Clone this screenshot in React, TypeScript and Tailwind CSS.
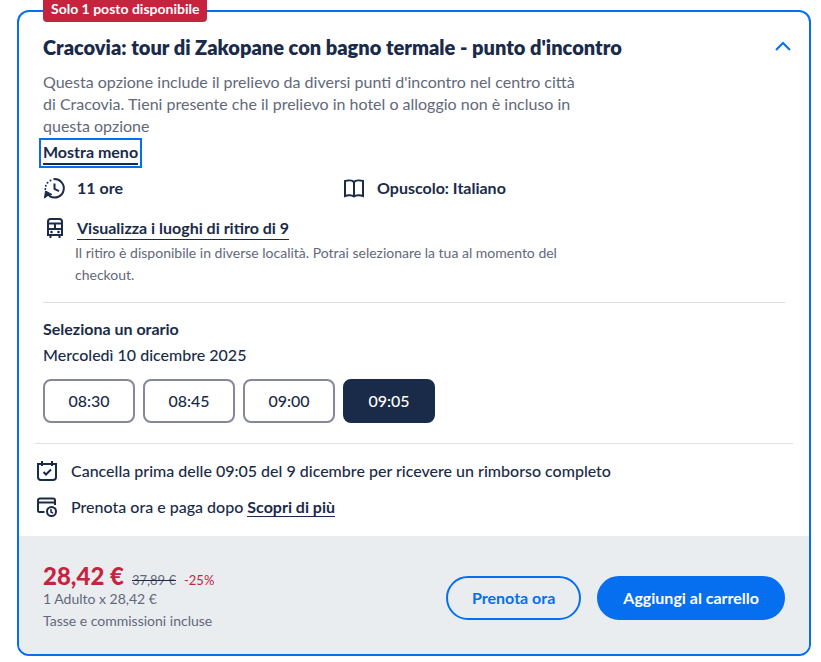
import { useState } from 'react';

const times = ['08:30', '08:45', '09:00', '09:05'];

const iconProps = {
    width: 24,
    height: 24,
    viewBox: '0 0 24 24',
    fill: 'none',
    stroke: 'currentColor',
    strokeWidth: 2,
    'aria-hidden': true,
};

function DurationIcon() {
    return (
        <svg {...iconProps}>
            <path d="M10.500 3.200A9.200 9.200 0 1 1 7 20.300" />
            <path d="M11.500 7.500V13L16 15.200" />
            <path d="M1.500 22L2.500 15L9 18.500L5.500 19Z" fill="currentColor" strokeWidth="1" />
            <path d="M4 18L7.500 20.500" />
            <g fill="currentColor" stroke="none">
                <circle cx="7.500" cy="4.500" r="1" />
                <circle cx="4.500" cy="6.800" r="1" />
                <circle cx="2.800" cy="9.800" r="1" />
                <circle cx="2.300" cy="13" r="1" />
            </g>
        </svg>
    );
}

function BookIcon() {
    return (
        <svg {...iconProps}>
            <path d="M11 6C9 4 4.500 4.200 2 5V20C4.500 19 9 19 11 20.500C13 19 17.500 19 20 20V5C17.500 4.200 13 4 11 6Z" />
            <path d="M11 6V20" />
        </svg>
    );
}

function BusIcon() {
    return (
        <svg {...iconProps}>
            <path d="M5 19V5.500C5 4 6 3 7.500 3H16.500C18 3 19 4 19 5.500V19Z" />
            <path d="M5 7.500H19M5 13H19M12 7.500V13" />
            <path d="M7.500 19V22M16.500 19V22" />
            <circle cx="8.500" cy="16" r="1.300" fill="currentColor" stroke="none" />
            <circle cx="15.500" cy="16" r="1.300" fill="currentColor" stroke="none" />
        </svg>
    );
}

function CalendarIcon() {
    return (
        <svg {...iconProps}>
            <path d="M3 5H21V18C21 19.800 19.800 21 18 21H6C4.200 21 3 19.800 3 18Z" />
            <path d="M7 2V7M17 2V7" />
            <path d="M8.500 13L11 15.500L16 10.500" />
        </svg>
    );
}

function PayLaterIcon() {
    return (
        <svg {...iconProps}>
            <path d="M9.500 17H4.500C3.500 17 3 16.500 3 15.500V5.500C3 4.200 3.700 3.500 5 3.500H18C19.300 3.500 20 4.200 20 5.500V10" />
            <path d="M3 7.500H20" />
            <circle cx="16.500" cy="16.500" r="4.500" />
            <path d="M16 14V17L18 18" strokeWidth="1.500" />
        </svg>
    );
}

export default function App() {
    const [selected, setSelected] = useState('09:05');

    return (
        <main className="bg-white pt-[10px] pr-[10px] pb-1.5 pl-[17px] font-[Lato,'Liberation_Sans',sans-serif] text-base text-[#1a2b49]">
            <article className="relative rounded-xl border-2 border-[#066ff0]">
                <span className="absolute -top-4 left-6 rounded bg-[#c7233f] px-2 py-1 text-sm leading-[18px] font-bold text-white">
                    Solo 1 posto disponibile
                </span>

                <div className="px-6 pt-[19px]">
                    <header className="flex items-center justify-between">
                        <h2 className="text-xl leading-8 font-extrabold">
                            Cracovia: tour di Zakopane con bagno termale - punto d'incontro
                        </h2>
                        <button type="button" aria-label="Chiudi dettagli" className="-mr-3.5 p-1 text-[#066ff0]">
                            <svg {...iconProps}>
                                <path d="M5 15L12 8L19 15" />
                            </svg>
                        </button>
                    </header>

                    <p className="mt-2 max-w-[532px] leading-[22px] text-[#63687a]">
                        Questa opzione include il prelievo da diversi punti d'incontro nel centro città di Cracovia. Tieni
                        presente che il prelievo in hotel o alloggio non è incluso in questa opzione
                    </p>
                    <button type="button" className="-mx-1 mt-px block border-2 border-[#066ff0] px-0.5 py-px">
                        <span className="block border-b-2 border-current leading-[22px] font-bold">Mostra meno</span>
                    </button>

                    <div className="mt-2 grid max-w-[600px] grid-cols-2">
                        <div className="flex items-center gap-2.5 font-bold">
                            <DurationIcon />
                            11 ore
                        </div>
                        <div className="flex items-center gap-2.5 font-bold">
                            <BookIcon />
                            Opuscolo: Italiano
                        </div>
                    </div>

                    <div className="mt-4 flex max-w-[536px] gap-2">
                        <span className="shrink-0">
                            <BusIcon />
                        </span>
                        <div>
                            <a href="#pickup" className="ml-0.5 inline-block border-b border-current leading-[22px] font-bold">
                                Visualizza i luoghi di ritiro di 9
                            </a>
                            <p className="mt-0.5 text-sm leading-[22px] text-[#63687a]">
                                Il ritiro è disponibile in diverse località. Potrai selezionare la tua al momento del checkout.
                            </p>
                        </div>
                    </div>

                    <section className="mt-4 border-t border-[#dcdfe4] pt-[15px]">
                        <h3 className="leading-[22px] font-bold">Seleziona un orario</h3>
                        <p className="mt-1 leading-[22px] font-medium">Mercoledì 10 dicembre 2025</p>
                        <div className="mt-[13px] flex flex-wrap gap-2">
                            {times.map(time => (
                                <button
                                    key={time}
                                    type="button"
                                    aria-pressed={time === selected}
                                    onClick={() => setSelected(time)}
                                    className={`h-11 w-23 rounded-lg border-2 font-medium ${
                                        time === selected ? 'border-[#1a2b49] bg-[#1a2b49] text-white' : 'border-[#86879a] bg-white'
                                    }`}
                                >
                                    {time}
                                </button>
                            ))}
                        </div>
                    </section>
                </div>

                <ul className="mx-4 mt-5 space-y-3 border-t border-[#dcdfe4] pt-[15px] pb-[17px] font-medium">
                    <li className="flex items-center gap-3">
                        <CalendarIcon />
                        Cancella prima delle 09:05 del 9 dicembre per ricevere un rimborso completo
                    </li>
                    <li className="flex items-center gap-3">
                        <PayLaterIcon />
                        <span>
                            Prenota ora e paga dopo{' '}
                            <a href="#learn-more" className="border-b border-current font-bold">
                                Scopri di più
                            </a>
                        </span>
                    </li>
                </ul>

                <footer className="flex items-center justify-between rounded-b-[10px] bg-[#e9edf0] px-6 pt-7 pb-[22px]">
                    <div className="text-sm leading-[22px] text-[#63687a]">
                        <p className="flex items-baseline gap-2 leading-4">
                            <span className="text-2xl leading-6 font-black text-[#c7233f]">28,42 €</span>
                            <del className="text-[13px] decoration-[#1a2b49]">37,89 €</del>
                            <span className="text-[13px] text-[#c7233f]">-25%</span>
                        </p>
                        <p>1 Adulto x 28,42 €</p>
                        <p>Tasse e commissioni incluse</p>
                    </div>
                    <div className="flex gap-4 font-bold">
                        <button type="button" className="h-11 rounded-full border-2 border-[#066ff0] px-6 text-[#066ff0]">
                            Prenota ora
                        </button>
                        <button type="button" className="h-11 rounded-full border-2 border-[#066ff0] bg-[#066ff0] px-6 text-white">
                            Aggiungi al carrello
                        </button>
                    </div>
                </footer>
            </article>
        </main>
    );
}
